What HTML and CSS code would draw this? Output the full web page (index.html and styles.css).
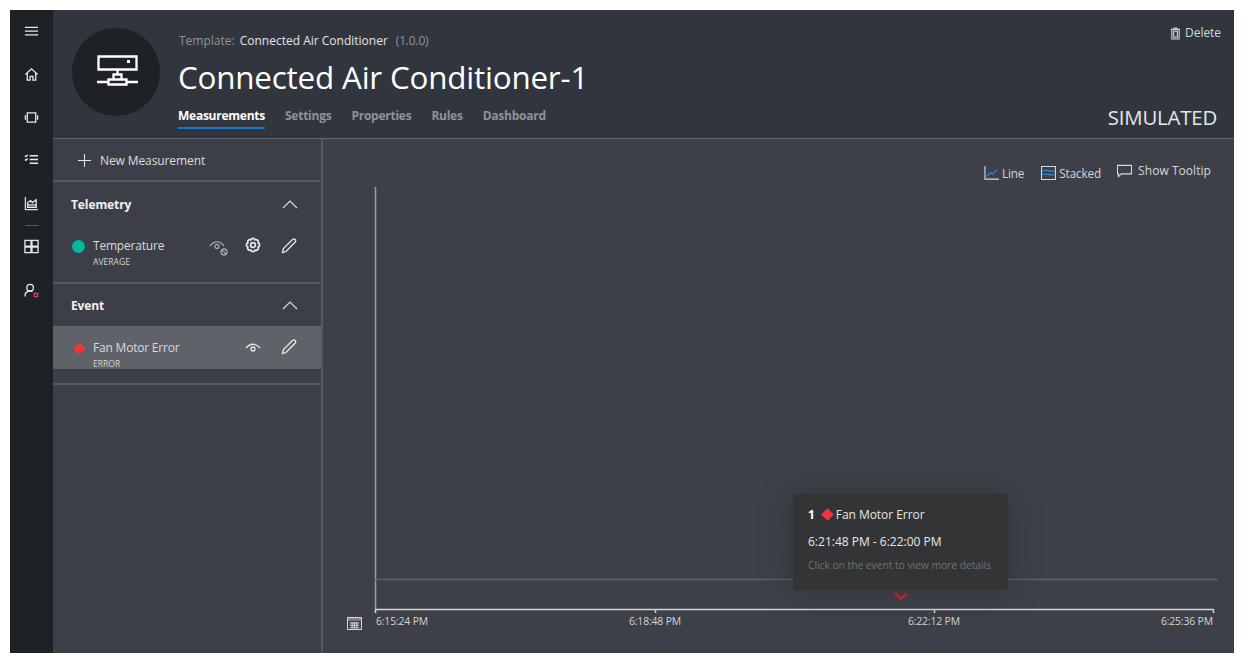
FILE: index.html
```html
<!DOCTYPE html>
<html lang="en">
<head>
<meta charset="utf-8">
<title>Connected Air Conditioner-1</title>
<link rel="stylesheet" href="styles.css">
</head>
<body>
<div class="app">
  <nav class="rail">
    <svg class="ri" viewBox="0 0 16 16"><path d="M1 3.500h14M1 7.500h14M1 11.500h14"/></svg>
    <svg class="ri ri-home" viewBox="0 0 16 16"><path d="M1.500 8 8 2l6.500 6M3.500 6.500V14h3v-4h3v4h3V6.500"/></svg>
    <svg class="ri ri-dev" viewBox="0 0 16 16"><path d="M3.500 3h9v10h-9zM1.500 5.500v5M14.500 5.500v5"/></svg>
    <svg class="ri ri-rules" viewBox="0 0 16 16"><path d="M6 4h9M6 8h9M6 12h9M1 4l1 1 2-2M1 8l1 1 2-2"/></svg>
    <svg class="ri ri-chart" viewBox="0 0 16 16"><path class="ch-a" d="M1.500 1v13.500H15"/><path d="M4 12V7l3-2 2 2 4-3v8zM4 9.500h9"/></svg>
    <div class="rail-sep"></div>
    <svg class="ri ri-grid" viewBox="0 0 16 16"><path d="M1 1.500h6.500v6H1zM8.500 1.500H15v6H8.500zM1 8.500h6.500v6H1zM8.500 8.500H15v6H8.500z"/></svg>
    <svg class="ri ri-user" viewBox="0 0 16 16"><circle cx="6.500" cy="5" r="3.500"/><path d="M1 14.500c0-3.500 2-6 5.500-6 1 0 2 .2 2.500.6"/><rect class="ri-red" x="11" y="11" width="3.500" height="3.500"/></svg>
  </nav>
  <div class="main">
    <header class="head">
      <div class="avatar">
        <svg viewBox="0 0 42 34" class="avatar-ico"><path d="M1.500 1.500h38v13h-38zM20.500 14.500v5M16.500 24.500v-5h8v5M11.500 24.500h18v5h-18zM0 27h11.500M29.500 27H41"/><rect class="dot" x="30" y="5" width="3" height="3"/></svg>
      </div>
      <div class="head-text">
        <div class="tpl"><span class="tpl-k">Template:</span><span class="tpl-v">Connected Air Conditioner</span><span class="tpl-k">(1.0.0)</span></div>
        <h1>Connected Air Conditioner-1</h1>
        <div class="tabs">
          <span class="tab on">Measurements</span><span class="tab">Settings</span><span class="tab">Properties</span><span class="tab">Rules</span><span class="tab">Dashboard</span>
        </div>
      </div>
      <div class="head-right">
        <span class="del"><svg class="del-ico" viewBox="0 0 12 14"><path d="M2 2.500h8V13H2zM1 2.500h10M4.500 2.500V1h3v1.500"/><rect x="4" y="4.500" width="4" height="6.500"/></svg>Delete</span>
        <span class="sim">SIMULATED</span>
      </div>
    </header>
    <div class="body">
      <aside class="panel">
        <div class="new"><svg class="plus" viewBox="0 0 16 16"><path d="M8 1v14M1 8h14"/></svg>New Measurement</div>
        <section class="group g-tel">
          <div class="g-head"><span>Telemetry</span><svg class="chev" viewBox="0 0 16 9"><path d="M1 8l7-7 7 7"/></svg></div>
          <div class="item">
            <span class="circle"></span>
            <div class="item-t"><div class="name">Temperature</div><div class="sub">AVERAGE</div></div>
            <div class="acts">
              <svg class="ic ic-off" viewBox="0 0 20 18"><path d="M1 7c4-5.500 10-5.500 14 0"/><circle cx="8" cy="7.500" r="2"/><circle cx="15" cy="13" r="3"/><path d="M13 11l4 4"/></svg>
              <svg class="ic ic-gear" viewBox="0 0 16 16"><circle cx="8" cy="8" r="2.400"/><path d="M13.170 10.140A2.300 2.300 0 0 1 10.140 13.170A2.300 2.300 0 0 1 5.860 13.170A2.300 2.300 0 0 1 2.830 10.140A2.300 2.300 0 0 1 2.830 5.860A2.300 2.300 0 0 1 5.860 2.830A2.300 2.300 0 0 1 10.140 2.830A2.300 2.300 0 0 1 13.170 5.860A2.300 2.300 0 0 1 13.170 10.140z"/></svg>
              <svg class="ic" viewBox="0 0 16 16"><path d="M1.500 14.500l1-4L11.500 1.500c1-.8 2-.8 2.700 0s.6 1.800 0 2.500L5 13.500z"/></svg>
            </div>
          </div>
        </section>
        <section class="group g-evt">
          <div class="g-head"><span>Event</span><svg class="chev" viewBox="0 0 16 9"><path d="M1 8l7-7 7 7"/></svg></div>
          <div class="item sel">
            <span class="diamond"></span>
            <div class="item-t"><div class="name">Fan Motor Error</div><div class="sub">ERROR</div></div>
            <div class="acts">
              <svg class="ic ic-eye" viewBox="0 0 16 12"><path d="M1 6c4-5 10-5 14 0"/><circle cx="8" cy="7" r="2"/></svg>
              <svg class="ic" viewBox="0 0 16 16"><path d="M1.500 14.500l1-4L11.500 1.500c1-.8 2-.8 2.700 0s.6 1.800 0 2.500L5 13.500z"/></svg>
            </div>
          </div>
        </section>
      </aside>
      <section class="chart">
        <div class="tools">
          <span class="tool t-line"><svg class="ti" viewBox="0 0 16 15"><path class="w" d="M1 0v14h15"/><path class="b" d="M3 11l4-4 2 2 5-5"/></svg>Line</span>
          <span class="tool t-stack"><svg class="ti" viewBox="0 0 16 15"><path class="w" d="M.5.500h15v14H.5z"/><path class="b" d="M1 5c4-2 9 2 14 0M1 9c4-2 9 2 14 0"/></svg>Stacked</span>
          <span class="tool t-tip"><svg class="ti" viewBox="0 0 16 14"><path class="w" d="M.5 1h15v9H4.500L1.500 13v-3h-1z"/></svg>Show Tooltip</span>
        </div>
        <div class="plot">
          <svg class="axes" viewBox="0 0 911 470" width="911" height="470">
            <path class="ax-y" d="M52.500 0V422"/>
            <path class="ax-g" d="M52 392.500H895"/>
            <path class="ax-x" d="M52 422.500H890.500M52.500 422v4M332.500 422v4M611.500 422v4M890.500 422v4"/>
            <path class="mark" d="M572 406.500l6 5 6-5"/>
          </svg>
          <div class="tooltip">
            <div class="tt-1"><b>1</b><span class="diamond tt-d"></span>Fan Motor Error</div>
            <div class="tt-2">6:21:48 PM - 6:22:00 PM</div>
            <div class="tt-3">Click on the event to view more details</div>
          </div>
        </div>
        <div class="xrow">
          <svg class="cal" viewBox="0 0 16 14"><path class="cal-band" d="M1 1h14v3H1z"/><path d="M.5.500h15v13H.5zM3 6.500h10M3 9h10M3 11.500h10M5.500 5.500v7M8 5.500v7M10.500 5.500v7"/></svg>
          <div class="xlabels"><span>6:15:24 PM</span><span>6:18:48 PM</span><span>6:22:12 PM</span><span>6:25:36 PM</span></div>
        </div>
      </section>
    </div>
  </div>
</div>
</body>
</html>
```
FILE: styles.css
```css
* { box-sizing: border-box; }
html, body { height: 100%; }
body {
  margin: 0;
  padding: 10px 15px 13px 10px;
  background: #fff;
  font-family: "Open Sans", "Noto Sans", "Liberation Sans", sans-serif;
  color: #e6e7e9;
  overflow: hidden;
}
svg { display: block; fill: none; stroke: currentColor; }
.app { display: flex; height: 643px; width: 1224px; }

.rail {
  width: 43px; flex: none; background: #1e2227; color: #e6e8ea;
  display: flex; flex-direction: column; align-items: center; padding-top: 14px;
}
.ri { width: 15px; height: 15px; stroke-width: 1.400; margin-bottom: 28px; flex: none; }
.ri-dev { margin-bottom: 27px; }
.ri-chart { margin-top: 1px; }
.ch-a { stroke: #d9d4e8; }
.rail-sep { width: 14px; height: 1px; background: #555a60; margin: -14px 0 13px; }
.ri-grid { margin-bottom: 29px; }
.ri-red { stroke: #e8404a; }

.main { flex: 1; display: flex; flex-direction: column; min-width: 0; }
.head {
  height: 129px; flex: none; background: #31363e; border-bottom: 1px solid #62666b;
  display: flex; padding: 18px 13px 0 19px;
}
.avatar {
  width: 88px; height: 88px; border-radius: 50%; background: #1e2125;
  display: flex; align-items: center; justify-content: center; flex: none;
}
.avatar-ico { width: 42px; height: 34px; color: #fff; stroke-width: 2.300; margin-left: 3px; }
.avatar-ico .dot { fill: #fff; stroke: none; }
.head-text { margin-left: 18px; flex: 1; min-width: 0; }
.tpl { font-size: 12px; line-height: 16px; margin-top: 5px; display: flex; gap: 5px; }
.tpl-k { color: #8f9399; }
.tpl-k:first-child { margin-left: 1px; }
.tpl-k:last-child { margin-left: 3px; letter-spacing: -.2px; }
.tpl-v { color: #e4e5e7; }
h1 { margin: 7px 0 0; font-size: 31.400px; line-height: 42px; font-weight: 400; color: #fff; letter-spacing: -.2px; white-space: nowrap; }
.tabs { display: flex; gap: 20px; margin-top: 9px; }
.tab { font-size: 12px; font-weight: 700; line-height: 18px; color: #8f9399; padding-bottom: 2px; letter-spacing: -.25px; }
.tab.on { color: #fff; border-bottom: 2px solid #0f78d4; }
.head-right { display: flex; flex-direction: column; align-items: flex-end; justify-content: space-between; height: 102px; }
.del { display: flex; align-items: center; gap: 4px; font-size: 12px; color: #d4d6d9; line-height: 16px; margin-top: -3px; margin-right: 0; letter-spacing: -.05px; }
.del-ico { width: 11px; height: 13px; stroke-width: 1.200; }
.sim { font-size: 20.400px; line-height: 26px; color: #e6e7e9; letter-spacing: -.2px; margin-right: 4px; }

.body { flex: 1; display: flex; min-height: 0; background: #3c3f47; }
.panel { width: 270px; flex: none; border-right: 2px solid #55585e; background: #3c3f47; }
.new {
  height: 43px; display: flex; align-items: center; padding: 2px 0 0 24px; gap: 8px;
  font-size: 12px; color: #dcdee0; border-bottom: 2px solid #55585e; letter-spacing: -.1px;
}
.plus { width: 15px; height: 15px; stroke-width: 1.100; color: #e6e7e9; }
.group { border-bottom: 2px solid #55585e; }
.g-tel { height: 102px; }
.g-evt { height: 101px; }
.g-head {
  height: 44px; display: flex; align-items: center; justify-content: space-between;
  padding: 0 23px 0 18px; font-size: 12px; font-weight: 700; color: #f2f2f3; letter-spacing: -.1px;
}
.g-evt .g-head { height: 42px; padding-top: 1px; }
.chev { width: 16px; height: 9px; stroke-width: 1.200; color: #d8dadc; }
.item { height: 43px; display: flex; align-items: flex-start; padding-left: 19px; overflow: hidden; }
.sel { background: #5f6268; }
.circle { width: 13px; height: 13px; border-radius: 50%; background: #00b8a0; margin: 14px 8px 0 0; flex: none; }
.diamond { width: 9px; height: 9px; background: #f4333c; transform: rotate(45deg); margin: 18px 9px 0 3px; flex: none; }
.item-t { flex: 1; min-width: 0; margin-top: 11px; }
.name { font-size: 12px; line-height: 17px; color: #d9dbdd; letter-spacing: -.2px; }
.sub { font-size: 8.500px; line-height: 12px; color: #d4d6d8; margin-top: 2px; letter-spacing: .05px; }
.sel .item-t { margin-top: 13px; }
.acts { display: flex; align-items: flex-start; gap: 20px; padding-right: 24px; padding-top: 12px; color: #e8e9eb; }
.sel .acts { padding-top: 13px; }
.ic { width: 16px; height: 16px; stroke-width: 1.300; flex: none; }
.ic-gear { stroke-width: 1.700; margin-top: -1px; }
.ic-off { width: 20px; height: 18px; color: #a3a6aa; margin-top: 1px; margin-right: -4px; }
.ic-eye { height: 12px; margin-top: 3px; }

.chart { flex: 1; min-width: 0; background: #3d4048; position: relative; display: flex; flex-direction: column; }
.tools { height: 48px; display: flex; justify-content: flex-end; align-items: flex-start; padding: 25px 23px 0 0; font-size: 11.700px; color: #d4d6d9; letter-spacing: -.1px; }
.tool { display: flex; align-items: center; gap: 3px; line-height: 16px; }
.t-line { margin-right: 17px; margin-top: 1px; }
.t-stack { margin-right: 16px; margin-top: 1px; }
.t-tip { gap: 6px; margin-top: -1px; font-size: 12px; letter-spacing: .05px; }
.ti { width: 15px; height: 14px; stroke-width: 1.200; }
.ti .w { stroke: #d8dadc; }
.ti .b { stroke: #2a8ad8; }
.plot { position: relative; height: 426px; flex: none; }
.axes { position: absolute; left: 0; top: 0; }
.ax-y { stroke: #9c9ea2; stroke-width: 1.500; }
.ax-g { stroke: #5c5f64; stroke-width: 1.500; }
.ax-x { stroke: #d4d6d8; stroke-width: 1.500; }
.mark { stroke: #c8242c; stroke-width: 3; }
.tooltip {
  position: absolute; left: 470px; top: 307px; width: 215px; height: 96px;
  background: #333435; padding: 12px 0 0 15px; box-shadow: 0 0 30px rgba(40,42,46,.45);
}
.tt-1 { display: flex; align-items: center; font-size: 12px; line-height: 17px; color: #e8e8e8; letter-spacing: -.05px; }
.tt-1 b { font-weight: 700; color: #fff; margin-right: 6px; }
.tt-d { margin: 0 4px 0 2px; }
.tt-2 { font-size: 12px; line-height: 17px; color: #e8e8e8; margin-top: 10px; }
.tt-3 { font-size: 10.400px; line-height: 14px; color: #717274; margin-top: 8px; white-space: nowrap; letter-spacing: -.08px; }

.xrow { display: flex; align-items: flex-start; padding-left: 24px; }
.cal { width: 15px; height: 13px; stroke-width: 1.100; color: #d8d9dc; flex: none; margin-top: 4px; margin-right: 14px; }
.cal-band { fill: #8b7fa0; stroke: none; }
.xlabels {
  display: flex; font-size: 10.400px; line-height: 14px; color: #d4d6d8; padding-top: 1px; letter-spacing: -.15px; white-space: nowrap;
}
.xlabels span:nth-child(2) { margin-left: 201px; }
.xlabels span:nth-child(3) { margin-left: 227px; }
.xlabels span:nth-child(4) { margin-left: 201px; }
```
